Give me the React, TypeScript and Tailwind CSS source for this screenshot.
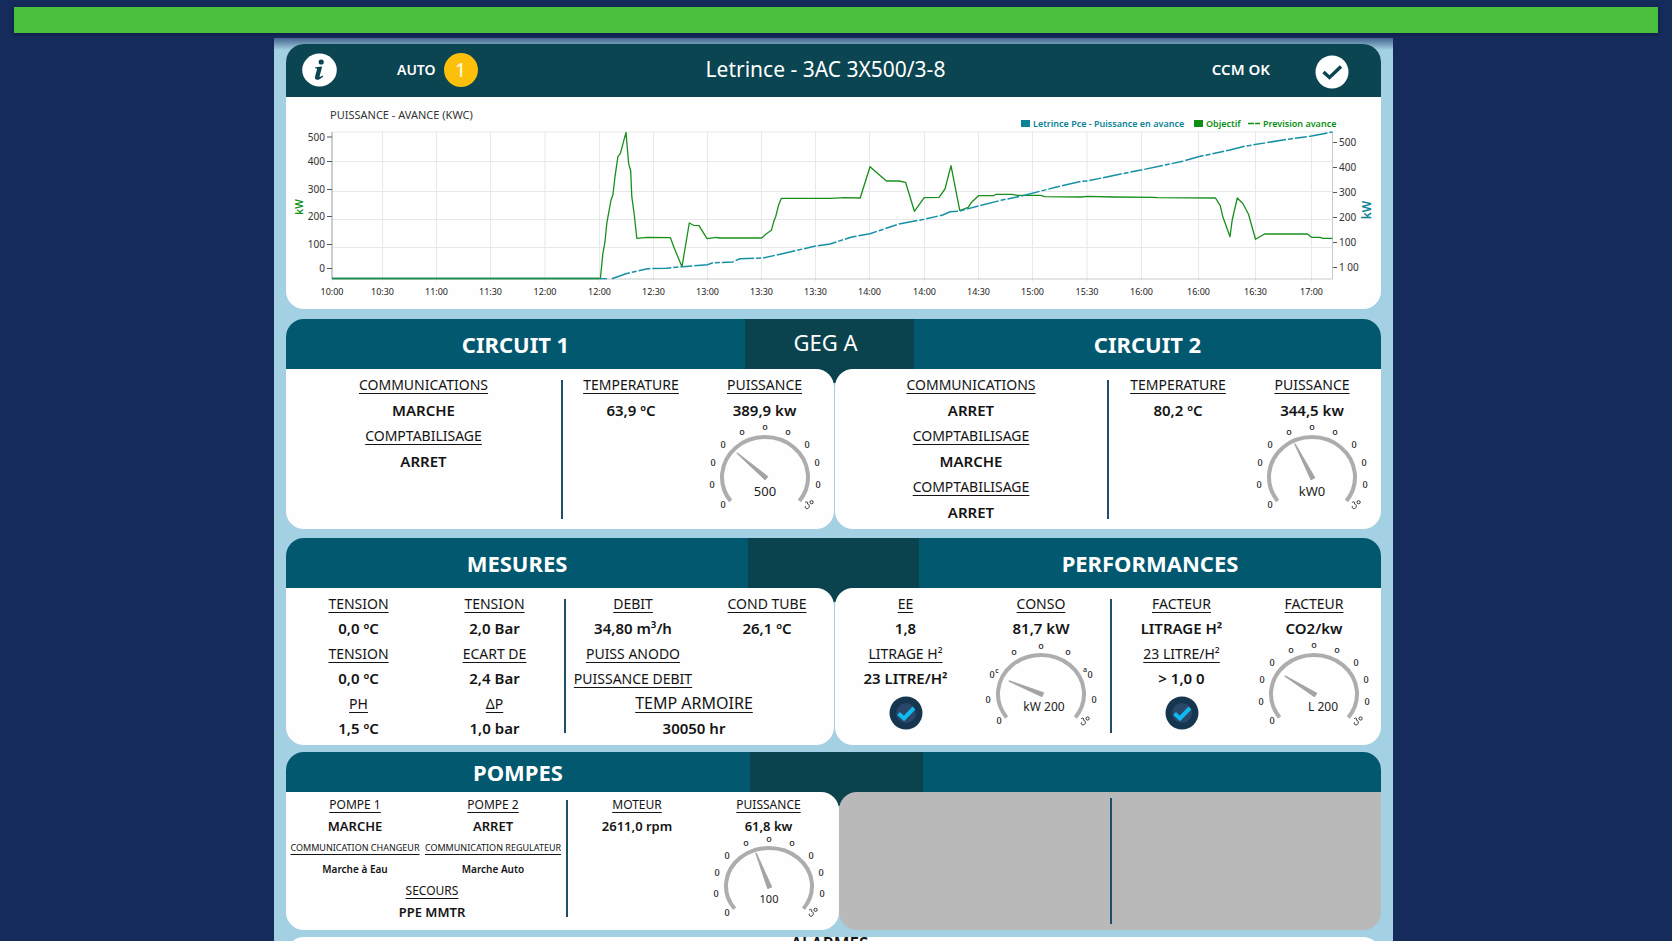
import type { ReactNode } from 'react';
import clsx from 'clsx';

const OBJECTIF =
  '332,278.5 600.4,278.5 602.9,253.3 605,241.7 606.8,223.3 608.6,213.3 611,200 612.9,195 615,176.7 617.9,156.7 620.4,153.3 626,132.3 628.6,163.3 630.7,171 631.8,196.7 634.3,215 636.8,238.3 647.5,237.3 670.4,237.7 674.3,248.3 682,266.7 689.3,223 693.6,225.3 699,225.7 707,238.7 716.4,237.3 719.3,238 761.8,238 765.7,234.3 771.4,230.3 774,220.7 775.7,216.7 778.6,205 781.4,198.3 830,198.3 844.5,197.7 860.2,198 870,166.7 886.4,181 899,181 905.6,182.3 914.4,211.3 924.2,197.7 939,197.3 945,189 951,165.7 959.8,210.7 968.2,207.3 970.7,203.3 978.4,195.7 993.6,195.7 996.2,194.3 1011.8,194.3 1017.6,195.3 1041,195.3 1044.5,196.7 1081,197 1087.5,196.3 1113.6,197 1153.6,197.3 1157.3,197.7 1215.5,198 1220.2,205.7 1223,217.3 1230,236.7 1232.2,220 1237.3,198 1243,203.7 1248.5,214.3 1255.5,239.3 1264.5,234 1307.5,234 1311.5,237.3 1320.2,237.3 1323,238.3 1332.5,238.3';

const PUISSANCE =
  '611.8,278.7 626,273.7 647.5,268.7 666.4,268.3 682,266.7 707.5,264.7 712.9,262.7 732.5,262 740,258.7 762.9,258 784.3,253.3 814.3,246.3 830,244 851.8,237 870,233.7 899,224 924.2,219.3 942.7,215 950,211.7 959.8,211 978.4,206 1001,200.3 1022.7,195.7 1055.5,187.3 1081,181.3 1087.5,181 1117.3,174.7 1142.7,169.7 1182.7,161.3 1198.4,156.7 1230,150 1244.5,146.3 1266.4,142.7 1291.8,138.7 1311.5,136 1332.5,132';

const TIMES: [number, string][] = [
  [332, '10:00'], [382.5, '10:30'], [436.5, '11:00'], [490.5, '11:30'], [545, '12:00'],
  [599.5, '12:00'], [653.5, '12:30'], [707.5, '13:00'], [761.5, '13:30'], [815.5, '13:30'],
  [869.5, '14:00'], [924.5, '14:00'], [978.5, '14:30'], [1032.5, '15:00'], [1087, '15:30'],
  [1141.5, '16:00'], [1198.5, '16:00'], [1255.5, '16:30'], [1311.5, '17:00'],
];

const LEFT_TICKS: [number, string][] = [
  [137, '500'], [161.5, '400'], [189.5, '300'], [216.5, '200'], [244.5, '100'], [268.5, '0'],
];

const RIGHT_TICKS: [number, string][] = [
  [142.5, '500'], [167.5, '400'], [192.5, '300'], [217.5, '200'], [242.5, '100'], [267.5, '1 00'],
];

function Chart() {
  return (
    <svg viewBox="286 97 1095 212" className="block w-full" role="img" aria-label="Puissance - avance">
      <text x="330" y="119" fontSize="11" fill="#333">PUISSANCE - AVANCE (KWC)</text>

      <g stroke="#e6e8e9" strokeWidth="1">
        {[132, 161.5, 191.5, 219.5, 247.5].map(y => <path key={y} d={`M332 ${y}H1332`} />)}
        {TIMES.map(([x]) => <path key={x} d={`M${x} 132V281`} />)}
      </g>
      <path d="M332 132V279" stroke="#a3a7a9" />
      <path d="M332 279H1332.5V132" stroke="#c6c9cb" fill="none" />

      <g fontSize="10" fill="#333">
        {LEFT_TICKS.map(([y, label]) => (
          <g key={y}>
            <path d={`M327 ${y}H332`} stroke="#555" />
            <text x="325" y={y + 3.5} textAnchor="end">{label}</text>
          </g>
        ))}
        {RIGHT_TICKS.map(([y, label]) => (
          <g key={y}>
            <path d={`M1333 ${y}H1337`} stroke="#555" />
            <text x="1339" y={y + 3.5}>{label}</text>
          </g>
        ))}
      </g>
      <g fontSize="9" fill="#222" textAnchor="middle">
        {TIMES.map(([x, label]) => <text key={x} x={x} y="295">{label}</text>)}
      </g>

      <text transform="translate(303 207) rotate(-90)" textAnchor="middle" fontSize="10" fontWeight="600" fill="#0c8f14">kW</text>
      <text transform="translate(1371 210) rotate(-90)" textAnchor="middle" fontSize="12" fontWeight="600" fill="#0b8296">kW</text>

      <polyline points={OBJECTIF} fill="none" stroke="#178f1b" strokeWidth="1.3" strokeLinejoin="round" />
      <path d="M332 278.5H599" stroke="#17875a" strokeWidth="1.3" />
      <path d="M600 278.7H607" stroke="#1590a5" strokeWidth="1.3" />
      <polyline points={PUISSANCE} fill="none" stroke="#1590a5" strokeWidth="1.5" strokeDasharray="19 2 5 2 12 2" />

      <g fontSize="9" fontWeight="600">
        <rect x="1021" y="120" width="9" height="7" fill="#0b8296" />
        <text x="1033" y="127" fill="#0b8296">Letrince Pce - Puissance en avance</text>
        <rect x="1194" y="120" width="9" height="7" fill="#0c8f14" />
        <text x="1206" y="127" fill="#0c8f14">Objectif</text>
        <path d="M1248 123.5H1254M1255 123.5H1260" stroke="#0c8f14" strokeWidth="1.3" />
        <text x="1263" y="127" fill="#0c8f14">Prevision avance</text>
      </g>
    </svg>
  );
}

const DOTS: [number, number][] = [
  [0, -50], [-23, -45], [23, -45], [-42, -32], [42, -32], [-52, -14], [52, -14], [-53, 8], [53, 8], [-42, 28],
];

// the CONSO dial has one graduation less on each side
const WIDE_DOTS: [number, number][] = [
  [0, -49], [-27, -43], [27, -43], [-49, -20], [49, -20], [-53, 6], [53, 6], [-42, 28],
];

type GaugeProps = {
  label: string;
  tip: [number, number];
  labelX?: number;
  labelSize?: number;
  ry?: number;
  top?: number;
  wide?: boolean;
};

function Gauge({ label, tip, labelX = 0, labelSize = 12, ry = 39, top = 53, wide }: GaugeProps) {
  const k = ry / 40;
  const angle = (Math.atan2(tip[1], tip[0]) * 180) / Math.PI;
  const len = Math.hypot(tip[0], tip[1]);
  return (
    <svg
      width="124"
      height={top + 34}
      viewBox={`-62 ${-top} 124 ${top + 34}`}
      className="block max-w-full overflow-visible"
      role="img"
      aria-label={label}
    >
      <path d={`M-34.4 ${ry * 0.6}A43 ${ry} 0 1 1 34.4 ${ry * 0.6}`} fill="none" stroke="#adadad" strokeWidth="4" />
      <path
        d={`M-2 -2.2L${len} -0.3V0.3L-2 2.2Z`}
        transform={`rotate(${angle})`}
        fill="#a3a3a3"
        stroke="#a3a3a3"
        strokeWidth="0.8"
        strokeLinejoin="round"
      />
      <g fontSize="9" fontWeight="500" fill="#222" textAnchor="middle">
        {(wide ? WIDE_DOTS : DOTS).map(([x, y]) => (
          <text key={`${x} ${y}`} x={x} y={y * k + 3}>{y < -40 ? 'o' : '0'}</text>
        ))}
        {wide && <text x="-44" y="-21" fontSize="7">c</text>}
        {wide && <text x="44" y="-22" fontSize="7">a</text>}
      </g>
      {/* worn last graduation */}
      <g transform={`translate(44 ${28 * k})`} fill="none" stroke="#333" strokeWidth="1">
        <path d="M-4 -2.4C-2.4 -4 -0.6 -3 -1.6 -1.2C1.4 -0.8 0.6 4 -2.2 3.6C-3.8 3.4 -4.2 2 -3.4 1" />
        <circle cx="2.6" cy="-2.8" r="1.6" />
      </g>
      <text x={labelX} y={labelSize > 12 ? 19 : 17} textAnchor="middle" fontSize={labelSize} fill="#222">{label}</text>
    </svg>
  );
}

type Size = 'lg' | 'md' | 'sm' | 'xs';

const LABEL: Record<Size, string> = {
  lg: 'text-[14px] leading-[26px]',
  md: 'text-[14px] leading-[25px]',
  sm: 'text-[12px] leading-[22px]',
  xs: 'text-[9px] leading-[22px]',
};

const VALUE: Record<Size, string> = {
  lg: 'text-[15px] leading-[25px]',
  md: 'text-[15px] leading-[25px]',
  sm: 'text-[13px] leading-[21px]',
  xs: 'text-[10px] leading-[21px]',
};

function Label({ size = 'md', children }: { size?: Size; children: ReactNode }) {
  return <dt className={clsx('underline underline-offset-3 whitespace-nowrap', LABEL[size])}>{children}</dt>;
}

function Value({ size = 'md', children }: { size?: Size; children: ReactNode }) {
  return <dd className={clsx('font-semibold whitespace-nowrap', VALUE[size])}>{children}</dd>;
}

function Column({ className, children }: { className?: string; children: ReactNode }) {
  return <dl className={clsx('flex min-w-0 flex-col items-center', className)}>{children}</dl>;
}

function Divider({ className }: { className: string }) {
  return <div className={clsx('w-[2px] bg-[#1f4e6b]', className)} />;
}

function CheckBadge() {
  return (
    <svg width="34" height="34" viewBox="0 0 34 34" className="mt-[5px] block" role="img" aria-label="OK">
      <circle cx="17" cy="17" r="16.5" fill="#16364f" />
      <circle cx="17" cy="17" r="10" fill="#2a4668" />
      <path d="M9.5 17.5L15 22.5L25 12" fill="none" stroke="#10b9f0" strokeWidth="4" />
    </svg>
  );
}

type SectionProps = {
  left: string;
  center?: string;
  right?: string;
  header: string;
  body: string;
  className: string;
  children: ReactNode;
};

function Section({ left, center, right, header, body, className, children }: SectionProps) {
  return (
    <section className={className}>
      <div className={clsx('grid items-center overflow-hidden rounded-t-[18px] bg-[#02586f] text-center text-white', header)}>
        <h2 className="text-[22px] font-bold">{left}</h2>
        <div className="flex h-full items-center justify-center bg-[#0a434d] pr-2 pb-1 text-[22px]">{center}</div>
        <h2 className="text-[22px] font-bold">{right}</h2>
      </div>
      <div className={clsx('grid bg-[linear-gradient(#0a434d_14px,#a3d0e2_14px)]', body)}>{children}</div>
    </section>
  );
}

const CARD_LEFT = 'grid rounded-b-[18px] rounded-tr-[18px] bg-[#fefefe]';
const CARD_RIGHT = 'grid rounded-b-[18px] rounded-tl-[18px] bg-[#fefefe]';

export default function App() {
  return (
    <div className="h-screen overflow-hidden bg-[#152b5c] pt-[7px] font-['Noto_Sans',sans-serif] text-[#141414]">
      <div className="mx-[14px] h-[26px] bg-[#4bc03d] shadow-[0_1px_4px_#0b1a40]" />

      <main className="mt-[5px] grid grid-cols-[274fr_1119fr_279fr]">
        <div className="col-start-2 bg-[#a3d0e2] bg-[linear-gradient(#44658f,#a3d0e2_12px)] px-3 pt-[6px]">
          <div className="overflow-hidden rounded-[18px] bg-[#fefefe]">
            <header className="grid h-[53px] grid-cols-[1fr_auto_1fr] items-center bg-[#0a4551] pr-8 pb-[2px] pl-4 text-white">
              <div className="flex items-center">
                <button type="button" aria-label="Informations" className="rounded-full">
                  <svg width="35" height="34" viewBox="0 0 35 34" className="block">
                    <ellipse cx="17.5" cy="17" rx="17.3" ry="16.4" fill="#fff" />
                    <circle cx="19.2" cy="9" r="2.6" fill="#0a4551" />
                    <path d="M13.2 14.2L20.2 13.6L17.6 23.2C17.4 24.3 18.2 24.3 20.6 22.6L21.2 23.4C18.4 26 16.6 26.9 14.8 26.7C13.2 26.5 12.6 25.4 13 23.8L15 16.2C15.2 15.4 14.6 15.2 12.9 15.2Z" fill="#0a4551" />
                  </svg>
                </button>
                <span className="ml-[60px] text-[14px] font-semibold">AUTO</span>
                <span className="ml-2 flex size-[34px] items-center justify-center rounded-full bg-[#fcbf0a] text-xl font-medium text-[#fff6d8]">1</span>
              </div>
              <h1 className="text-[21px]">Letrince - 3AC 3X500/3-8</h1>
              <div className="flex items-center justify-end">
                <span className="mr-[45px] text-[15px] font-semibold">CCM OK</span>
                <svg width="34" height="34" viewBox="0 0 34 34" className="mt-1 block" role="img" aria-label="OK">
                  <circle cx="17" cy="17" r="16.5" fill="#fff" />
                  <path d="M8.5 17L14.5 22.5L26 11.5" fill="none" stroke="#0a4551" strokeWidth="3.4" />
                </svg>
              </div>
            </header>
            <Chart />
          </div>

          <Section
            left="CIRCUIT 1"
            center="GEG A"
            right="CIRCUIT 2"
            header="h-[50px] grid-cols-[459fr_169fr_467fr]"
            body="grid-cols-[548fr_546fr] gap-px"
            className="mt-[10px]"
          >
            <div className={clsx(CARD_LEFT, 'grid-cols-[275fr_2px_136fr_131fr] pt-[3px] pr-1 pb-1')}>
              <Column>
                <Label size="lg">COMMUNICATIONS</Label>
                <Value size="lg">MARCHE</Value>
                <Label size="lg">COMPTABILISAGE</Label>
                <Value size="lg">ARRET</Value>
              </Column>
              <Divider className="mt-2 mb-[6px]" />
              <Column>
                <Label size="lg">TEMPERATURE</Label>
                <Value size="lg">63,9 ºC</Value>
              </Column>
              <Column>
                <Label size="lg">PUISSANCE</Label>
                <Value size="lg">389,9 kw</Value>
                <Gauge label="500" tip={[-28, -24]} ry={40} top={54} labelSize={13} />
              </Column>
            </div>
            <div className={clsx(CARD_RIGHT, 'grid-cols-[272fr_2px_138fr_130fr] pt-[3px] pr-1 pb-1')}>
              <Column>
                <Label size="lg">COMMUNICATIONS</Label>
                <Value size="lg">ARRET</Value>
                <Label size="lg">COMPTABILISAGE</Label>
                <Value size="lg">MARCHE</Value>
                <Label size="lg">COMPTABILISAGE</Label>
                <Value size="lg">ARRET</Value>
              </Column>
              <Divider className="mt-2 mb-[6px]" />
              <Column>
                <Label size="lg">TEMPERATURE</Label>
                <Value size="lg">80,2 ºC</Value>
              </Column>
              <Column>
                <Label size="lg">PUISSANCE</Label>
                <Value size="lg">344,5 kw</Value>
                <Gauge label="kW0" tip={[-17, -33]} ry={40} top={54} labelSize={13} />
              </Column>
            </div>
          </Section>

          <Section
            left="MESURES"
            right="PERFORMANCES"
            header="h-[50px] grid-cols-[462fr_171fr_462fr]"
            body="grid-cols-[548fr_546fr] gap-px"
            className="mt-[9px]"
          >
            <div className={clsx(CARD_LEFT, 'grid-cols-[141fr_135fr_2px_268fr] pt-[3px] pb-1 pl-[2px]')}>
              <Column>
                <Label>TENSION</Label>
                <Value>0,0 ºC</Value>
                <Label>TENSION</Label>
                <Value>0,0 ºC</Value>
                <Label>PH</Label>
                <Value>1,5 ºC</Value>
              </Column>
              <Column className="pr-1">
                <Label>TENSION</Label>
                <Value>2,0 Bar</Value>
                <Label>ECART DE</Label>
                <Value>2,4 Bar</Value>
                <Label>ΔP</Label>
                <Value>1,0 bar</Value>
              </Column>
              <Divider className="my-2" />
              <div>
                <div className="grid grid-cols-2">
                  <Column>
                    <Label>DEBIT</Label>
                    <Value>34,80 m³/h</Value>
                    <Label>PUISS ANODO</Label>
                    <Label>PUISSANCE DEBIT</Label>
                  </Column>
                  <Column>
                    <Label>COND TUBE</Label>
                    <Value>26,1 ºC</Value>
                  </Column>
                </div>
                <dl className="pr-3 text-center">
                  <dt className="text-base leading-[25px] underline underline-offset-3">TEMP ARMOIRE</dt>
                  <Value>30050 hr</Value>
                </dl>
              </div>
            </div>
            <div className={clsx(CARD_RIGHT, 'grid-cols-[141fr_134fr_2px_139fr_126fr] pt-[3px] pr-1 pb-1')}>
              <Column>
                <Label>EE</Label>
                <Value>1,8</Value>
                <Label>LITRAGE H²</Label>
                <Value>23 LITRE/H²</Value>
                <CheckBadge />
              </Column>
              <Column className="pr-1">
                <Label>CONSO</Label>
                <Value>81,7 kW</Value>
                <Gauge label="kW 200" tip={[-32, -13]} labelX={3} wide />
              </Column>
              <Divider className="my-2" />
              <Column>
                <Label>FACTEUR</Label>
                <Value>LITRAGE H²</Value>
                <Label>23 LITRE/H²</Label>
                <Value>&gt; 1,0 0</Value>
                <CheckBadge />
              </Column>
              <Column>
                <Label>FACTEUR</Label>
                <Value>CO2/kw</Value>
                <Gauge label="L 200" tip={[-29, -18]} labelX={9} />
              </Column>
            </div>
          </Section>

          <Section
            left="POMPES"
            header="h-[40px] grid-cols-[464fr_173fr_458fr]"
            body="grid-cols-[553fr_542fr]"
            className="mt-[7px]"
          >
            <div className={clsx(CARD_LEFT, 'grid-cols-[280fr_2px_138fr_129fr] pt-[2px] pr-1 pb-[7px]')}>
              <div>
                <div className="grid grid-cols-[138fr_138fr] pr-1">
                  <Column>
                    <Label size="sm">POMPE 1</Label>
                    <Value size="sm">MARCHE</Value>
                    <Label size="xs">COMMUNICATION CHANGEUR</Label>
                    <Value size="xs">Marche à Eau</Value>
                  </Column>
                  <Column>
                    <Label size="sm">POMPE 2</Label>
                    <Value size="sm">ARRET</Value>
                    <Label size="xs">COMMUNICATION REGULATEUR</Label>
                    <Value size="xs">Marche Auto</Value>
                  </Column>
                </div>
                <Column className="pl-3">
                  <Label size="sm">SECOURS</Label>
                  <Value size="sm">PPE MMTR</Value>
                </Column>
              </div>
              <Divider className="my-[6px]" />
              <Column>
                <Label size="sm">MOTEUR</Label>
                <Value size="sm">2611,0 rpm</Value>
              </Column>
              <Column className="pr-1">
                <Label size="sm">PUISSANCE</Label>
                <Value size="sm">61,8 kw</Value>
                <Gauge label="100" tip={[-13, -33]} ry={38} top={49} labelSize={11} />
              </Column>
            </div>
            <div className="grid grid-cols-[271fr_2px_269fr] rounded-b-[18px] rounded-tl-[18px] bg-[#b9b9b9]">
              <Divider className="col-start-2 my-[6px]" />
            </div>
          </Section>

          <section className="mt-[7px] rounded-t-[18px] bg-[#fefefe] pr-2 pb-10 text-center">
            <h2 className="text-[17px] leading-[14px] font-semibold">ALARMES</h2>
          </section>
        </div>
      </main>
    </div>
  );
}
